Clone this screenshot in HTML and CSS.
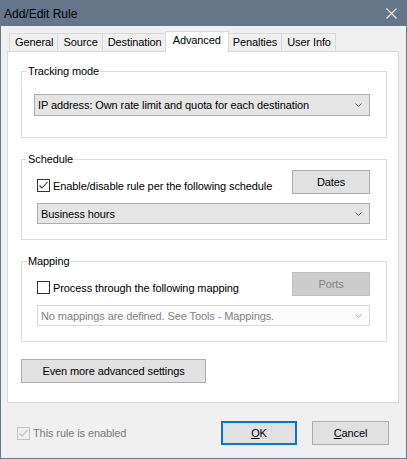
FILE: index.html
```html
<!DOCTYPE html>
<html>
<head>
<meta charset="utf-8">
<link rel="stylesheet" href="styles.css">
</head>
<body>
<div class="window">
  <div class="titlebar">
    <span class="title">Add/Edit Rule</span>
    <svg class="close" viewBox="0 0 11 11" width="11" height="11"><path d="M0.5 0.5 L10.5 10.5 M10.5 0.5 L0.5 10.5" stroke="#f4f4f4" stroke-width="1.1" fill="none"/></svg>
  </div>
  <div class="content">
    <div class="tabs">
      <div class="tab">General</div>
      <div class="tab">Source</div>
      <div class="tab">Destination</div>
      <div class="tab active">Advanced</div>
      <div class="tab">Penalties</div>
      <div class="tab">User Info</div>
    </div>
    <div class="panel">
      <fieldset class="group">
        <legend>Tracking mode</legend>
        <div class="group-body track">
          <div class="combo"><span>IP address: Own rate limit and quota for each destination</span><svg class="arrow" viewBox="0 0 7 4" width="7" height="4"><path d="M0.5 0.5 L3.5 3.5 L6.5 0.5" stroke="#606060" fill="none"/></svg></div>
        </div>
      </fieldset>
      <fieldset class="group">
        <legend>Schedule</legend>
        <div class="group-body opt">
          <div class="row">
            <label class="check"><svg class="cb" viewBox="0 0 13 13" width="13" height="13"><rect x="0.5" y="0.5" width="12" height="12" fill="#fff" stroke="#333"/><path d="M2.5 6.5 L5 9 L10.5 3" fill="none" stroke="#333" stroke-width="1.1"/></svg><span>Enable/disable rule per the following schedule</span></label>
            <button class="btn side">Dates</button>
          </div>
          <div class="combo short"><span>Business hours</span><svg class="arrow" viewBox="0 0 7 4" width="7" height="4"><path d="M0.5 0.5 L3.5 3.5 L6.5 0.5" stroke="#606060" fill="none"/></svg></div>
        </div>
      </fieldset>
      <fieldset class="group">
        <legend>Mapping</legend>
        <div class="group-body opt">
          <div class="row">
            <label class="check"><svg class="cb" viewBox="0 0 13 13" width="13" height="13"><rect x="0.5" y="0.5" width="12" height="12" fill="#fff" stroke="#333"/></svg><span>Process through the following mapping</span></label>
            <button class="btn side disabled">Ports</button>
          </div>
          <div class="combo short disabled"><span>No mappings are defined. See Tools - Mappings.</span><svg class="arrow" viewBox="0 0 7 4" width="7" height="4"><path d="M0.5 0.5 L3.5 3.5 L6.5 0.5" stroke="#a8a8a8" fill="none"/></svg></div>
        </div>
      </fieldset>
      <button class="btn wide">Even more advanced settings</button>
    </div>
    <div class="footer">
      <label class="check disabled"><svg class="cb" viewBox="0 0 13 13" width="13" height="13"><rect x="0.5" y="0.5" width="12" height="12" fill="none" stroke="#c4c4c4"/><path d="M2.5 6.5 L5 9 L10.5 3" fill="none" stroke="#b8b8b8" stroke-width="1.1"/></svg><span>This rule is enabled</span></label>
      <button class="btn ok default"><u>O</u>K</button>
      <button class="btn ok cancel"><u>C</u>ancel</button>
    </div>
  </div>
</div>
</body>
</html>
```

FILE: styles.css
```css
* { box-sizing: border-box; }
html, body { margin: 0; padding: 0; }
body {
  width: 407px;
  height: 459px;
  font-family: "Liberation Sans", Arial, sans-serif;
  font-size: 11px;
  letter-spacing: -0.1px;
  color: #000;
  background: #f0f0f0;
  overflow: hidden;
}
.window {
  width: 407px;
  height: 459px;
  border: 1px solid #667589;
  background: #f0f0f0;
  display: flex;
  flex-direction: column;
}
.titlebar {
  height: 25px;
  flex: none;
  background: #667589;
  display: flex;
  align-items: center;
  justify-content: space-between;
  padding: 0 9px 0 3px;
}
.title { color: #000; font-size: 12px; letter-spacing: 0; }
.close { display: block; }

.content {
  padding: 5px 7px 0 6px;
  display: flex;
  flex-direction: column;
}
.tabs {
  display: flex;
  align-items: flex-end;
  height: 20px;
  margin-left: 2px;
}
.tab {
  height: 18px;
  padding: 0 4px 0 5px;
  border: 1px solid #d9d9d9;
  border-bottom: none;
  background: #f0f0f0;
  margin-left: -1px;
  line-height: 17px;
  white-space: nowrap;
}
.tab:first-child { margin-left: 0; }
.tab.active {
  height: 21px;
  margin-bottom: -1px;
  margin-left: -2px;
  margin-right: -2px;
  padding: 0 7px;
  background: #fff;
  position: relative;
  z-index: 1;
  line-height: 17px;
}
.tab.active + .tab { margin-left: 0; }

.panel {
  height: 352px;
  border: 1px solid #d9d9d9;
  background: #fff;
  padding: 12px 11px 0 13px;
  display: flex;
  flex-direction: column;
  align-items: flex-start;
}
.group {
  width: 100%;
  margin: 0 0 14px 0;
  padding: 0;
  border: 1px solid #dcdcdc;
  min-width: 0;
}
.group legend {
  margin-left: 5px;
  padding: 0 1px;
  line-height: 14px;
}
.group-body.track { padding: 16px 16px 21px 12px; }
.group-body.opt { padding: 4px 16px 15px 15px; }

.row {
  display: flex;
  align-items: flex-start;
}
.check {
  display: flex;
  align-items: center;
  white-space: nowrap;
}
.row .check { margin-top: 9px; }
.cb { display: block; flex: none; margin-right: 3px; }
.check.disabled { color: #7a7a7a; }

.combo {
  height: 22px;
  border: 1px solid #adadad;
  background: #e5e5e5;
  display: flex;
  align-items: center;
  justify-content: space-between;
  padding: 0 7px 0 3px;
  white-space: nowrap;
}
.combo.short { height: 21px; margin-top: 9px; }
.combo.disabled {
  background: #fcfcfc;
  border-color: #d9d9d9;
  color: #838383;
}
.arrow { display: block; flex: none; }

.btn {
  font: inherit;
  letter-spacing: inherit;
  color: #000;
  height: 24px;
  border: 1px solid #adadad;
  background: #e1e1e1;
  padding: 0;
  margin: 0;
}
.btn.side { width: 78px; margin-left: auto; }
.btn.disabled {
  background: #cccccc;
  border-color: #bfbfbf;
  color: #838383;
}
.btn.wide { width: 185px; margin-top: 3px; }

.footer {
  display: flex;
  align-items: center;
  margin-top: 18px;
  padding-left: 10px;
  padding-right: 10px;
}
.btn.ok { width: 76px; }
.btn.default {
  margin-left: auto;
  border: 2px solid #0078d7;
}
.btn.cancel { margin-left: 15px; width: 77px; }
```
